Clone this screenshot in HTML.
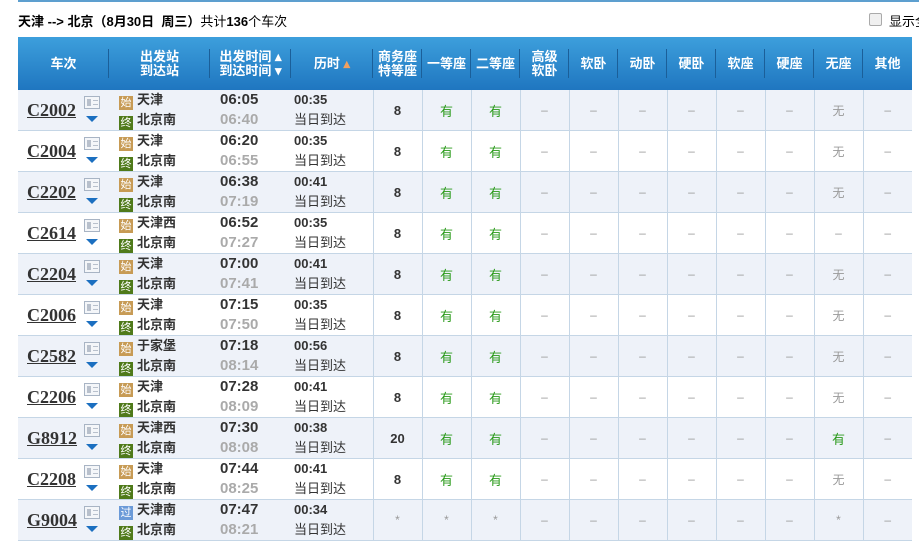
<!DOCTYPE html>
<html><head><meta charset="utf-8"><style>
body{margin:0;width:919px;height:529px;overflow:hidden;background:#fff;font-family:"Liberation Sans","Noto Sans CJK SC",sans-serif;position:relative}
.topline{position:absolute;left:18px;top:0;width:901px;height:2px;border-bottom:2px solid #5d9fcf;border-left:2px solid #5d9fcf;box-sizing:border-box}
.title{position:absolute;left:18px;top:11px;font-size:13px;color:#000}
.title b{font-weight:bold}
.chk{position:absolute;left:869px;top:13px;width:11px;height:11px;border:1px solid #aaa;border-radius:2px;background:#f0f0f0}
.chkt{position:absolute;left:889px;top:11px;font-size:13px;white-space:nowrap}
table{position:absolute;left:18px;top:37px;border-collapse:collapse;table-layout:fixed;width:894px}
th{height:53px;padding:0;color:#fff;font-size:13px;font-weight:bold;background:linear-gradient(#3d9fdc,#1f76c0);line-height:14px;position:relative}
th:after{content:"";position:absolute;right:0;top:12px;height:29px;border-right:1px solid #1b5f99}
th:last-child:after{display:none}
td{height:40px;padding:0;border-bottom:1px solid #c5d6e6;font-size:12px;text-align:center;color:#999}
tr.o td{background:#eef2f9}
td.s{border-left:1px solid #c5d6e6}
td.n{text-align:left;padding-left:9px;position:relative}
td.n u{font-family:"Liberation Serif",serif;font-weight:bold;font-size:18px;color:#333}
.ic{position:absolute;left:66px;top:6px;width:16px;height:13px;border:1px solid #a8b4c4;background:#f4f6f9;box-sizing:border-box}
.ic:before{content:"";position:absolute;left:2px;top:2px;width:4px;height:7px;background:#b8c0cc}
.ic:after{content:"";position:absolute;left:8px;top:3px;width:5px;height:3px;border-top:1px solid #b8c0cc;border-bottom:1px solid #b8c0cc}
.ar{position:absolute;left:68px;top:26px;border-left:6px solid transparent;border-right:6px solid transparent;border-top:6px solid #1b6fc0}
td.st{text-align:left;color:#333;font-size:13px;font-weight:bold;line-height:20px;padding-left:10px}
.b{display:inline-block;width:14px;height:14px;font-size:11px;line-height:14px;text-align:center;color:#fff;margin-right:4px;vertical-align:-2px;font-weight:normal}
.g1{background:#c79b55}.g2{background:#4f7a1a}.g3{background:#6b9ad8}
td.t{text-align:left;line-height:20px;font-weight:bold;font-size:15px;color:#333;padding-left:10px}
td.t span{color:#aaa}
td.d{text-align:left;line-height:20px;color:#333;font-size:13px;padding-left:3px}
.y{color:#2a9a1a;font-size:13px}
.num{color:#333;font-weight:bold;font-size:13px}
</style></head><body>
<div class="topline"></div>
<div class="title"><b>天津 --&gt; 北京（8月30日&nbsp; 周三）</b>共计<b>136</b>个车次</div>
<div class="chk"></div><div class="chkt">显示全</div>
<table>
<colgroup><col style="width:91px"><col style="width:101px"><col style="width:81px"><col style="width:82px"><col style="width:49px"><col style="width:49px"><col style="width:49px"><col style="width:49px"><col style="width:49px"><col style="width:49px"><col style="width:49px"><col style="width:49px"><col style="width:49px"><col style="width:49px"><col style="width:49px"></colgroup>
<tr><th>车次</th><th>出发站<br>到达站</th><th>出发时间 ▴<br>到达时间 ▾</th><th>历时 <span style="color:#f0a060">▴</span></th><th>商务座<br>特等座</th><th>一等座</th><th>二等座</th><th>高级<br>软卧</th><th>软卧</th><th>动卧</th><th>硬卧</th><th>软座</th><th>硬座</th><th>无座</th><th>其他</th></tr>

<tr class="o"><td class="n"><u>C2002</u><i class="ic"></i><i class="ar"></i></td><td class="st"><span class="b g1">始</span>天津<br><span class="b g2">终</span>北京南</td><td class="t">06:05<br><span>06:40</span></td><td class="d"><b>00:35</b><br>当日到达</td><td class="s num">8</td><td class="s y">有</td><td class="s y">有</td><td class="s">–</td><td class="s">–</td><td class="s">–</td><td class="s">–</td><td class="s">–</td><td class="s">–</td><td class="s">无</td><td class="s">–</td></tr>
<tr><td class="n"><u>C2004</u><i class="ic"></i><i class="ar"></i></td><td class="st"><span class="b g1">始</span>天津<br><span class="b g2">终</span>北京南</td><td class="t">06:20<br><span>06:55</span></td><td class="d"><b>00:35</b><br>当日到达</td><td class="s num">8</td><td class="s y">有</td><td class="s y">有</td><td class="s">–</td><td class="s">–</td><td class="s">–</td><td class="s">–</td><td class="s">–</td><td class="s">–</td><td class="s">无</td><td class="s">–</td></tr>
<tr class="o"><td class="n"><u>C2202</u><i class="ic"></i><i class="ar"></i></td><td class="st"><span class="b g1">始</span>天津<br><span class="b g2">终</span>北京南</td><td class="t">06:38<br><span>07:19</span></td><td class="d"><b>00:41</b><br>当日到达</td><td class="s num">8</td><td class="s y">有</td><td class="s y">有</td><td class="s">–</td><td class="s">–</td><td class="s">–</td><td class="s">–</td><td class="s">–</td><td class="s">–</td><td class="s">无</td><td class="s">–</td></tr>
<tr><td class="n"><u>C2614</u><i class="ic"></i><i class="ar"></i></td><td class="st"><span class="b g1">始</span>天津西<br><span class="b g2">终</span>北京南</td><td class="t">06:52<br><span>07:27</span></td><td class="d"><b>00:35</b><br>当日到达</td><td class="s num">8</td><td class="s y">有</td><td class="s y">有</td><td class="s">–</td><td class="s">–</td><td class="s">–</td><td class="s">–</td><td class="s">–</td><td class="s">–</td><td class="s">–</td><td class="s">–</td></tr>
<tr class="o"><td class="n"><u>C2204</u><i class="ic"></i><i class="ar"></i></td><td class="st"><span class="b g1">始</span>天津<br><span class="b g2">终</span>北京南</td><td class="t">07:00<br><span>07:41</span></td><td class="d"><b>00:41</b><br>当日到达</td><td class="s num">8</td><td class="s y">有</td><td class="s y">有</td><td class="s">–</td><td class="s">–</td><td class="s">–</td><td class="s">–</td><td class="s">–</td><td class="s">–</td><td class="s">无</td><td class="s">–</td></tr>
<tr><td class="n"><u>C2006</u><i class="ic"></i><i class="ar"></i></td><td class="st"><span class="b g1">始</span>天津<br><span class="b g2">终</span>北京南</td><td class="t">07:15<br><span>07:50</span></td><td class="d"><b>00:35</b><br>当日到达</td><td class="s num">8</td><td class="s y">有</td><td class="s y">有</td><td class="s">–</td><td class="s">–</td><td class="s">–</td><td class="s">–</td><td class="s">–</td><td class="s">–</td><td class="s">无</td><td class="s">–</td></tr>
<tr class="o"><td class="n"><u>C2582</u><i class="ic"></i><i class="ar"></i></td><td class="st"><span class="b g1">始</span>于家堡<br><span class="b g2">终</span>北京南</td><td class="t">07:18<br><span>08:14</span></td><td class="d"><b>00:56</b><br>当日到达</td><td class="s num">8</td><td class="s y">有</td><td class="s y">有</td><td class="s">–</td><td class="s">–</td><td class="s">–</td><td class="s">–</td><td class="s">–</td><td class="s">–</td><td class="s">无</td><td class="s">–</td></tr>
<tr><td class="n"><u>C2206</u><i class="ic"></i><i class="ar"></i></td><td class="st"><span class="b g1">始</span>天津<br><span class="b g2">终</span>北京南</td><td class="t">07:28<br><span>08:09</span></td><td class="d"><b>00:41</b><br>当日到达</td><td class="s num">8</td><td class="s y">有</td><td class="s y">有</td><td class="s">–</td><td class="s">–</td><td class="s">–</td><td class="s">–</td><td class="s">–</td><td class="s">–</td><td class="s">无</td><td class="s">–</td></tr>
<tr class="o"><td class="n"><u>G8912</u><i class="ic"></i><i class="ar"></i></td><td class="st"><span class="b g1">始</span>天津西<br><span class="b g2">终</span>北京南</td><td class="t">07:30<br><span>08:08</span></td><td class="d"><b>00:38</b><br>当日到达</td><td class="s num">20</td><td class="s y">有</td><td class="s y">有</td><td class="s">–</td><td class="s">–</td><td class="s">–</td><td class="s">–</td><td class="s">–</td><td class="s">–</td><td class="s y">有</td><td class="s">–</td></tr>
<tr><td class="n"><u>C2208</u><i class="ic"></i><i class="ar"></i></td><td class="st"><span class="b g1">始</span>天津<br><span class="b g2">终</span>北京南</td><td class="t">07:44<br><span>08:25</span></td><td class="d"><b>00:41</b><br>当日到达</td><td class="s num">8</td><td class="s y">有</td><td class="s y">有</td><td class="s">–</td><td class="s">–</td><td class="s">–</td><td class="s">–</td><td class="s">–</td><td class="s">–</td><td class="s">无</td><td class="s">–</td></tr>
<tr class="o"><td class="n"><u>G9004</u><i class="ic"></i><i class="ar"></i></td><td class="st"><span class="b g3">过</span>天津南<br><span class="b g2">终</span>北京南</td><td class="t">07:47<br><span>08:21</span></td><td class="d"><b>00:34</b><br>当日到达</td><td class="s">*</td><td class="s">*</td><td class="s">*</td><td class="s">–</td><td class="s">–</td><td class="s">–</td><td class="s">–</td><td class="s">–</td><td class="s">–</td><td class="s">*</td><td class="s">–</td></tr>
</table>
</body></html>
